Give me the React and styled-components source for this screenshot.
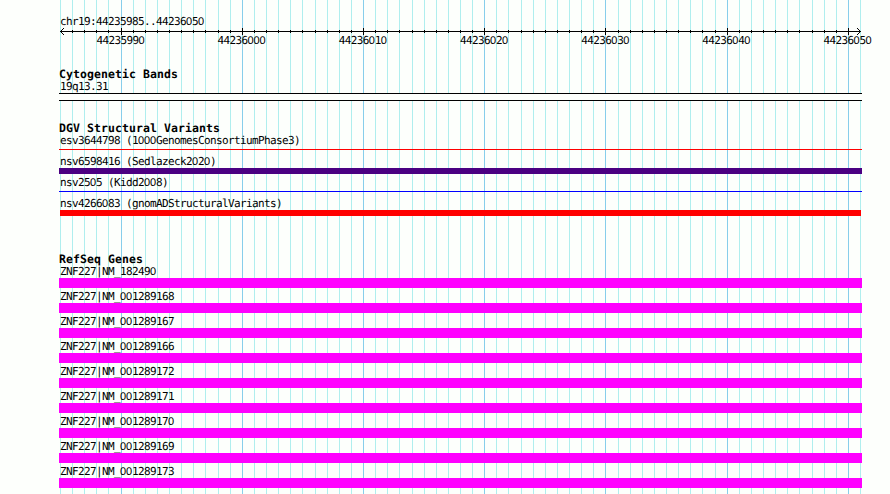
import React from "react";
import styled, { createGlobalStyle } from "styled-components";

const Reset = createGlobalStyle`
  * { box-sizing: border-box; }
  body { margin: 0; background: #fdfffc; overflow: hidden; }
`;

const Browser = styled.main`
  position: relative;
  width: 890px;
  height: 494px;
  overflow: hidden;
  background: #fdfffc;
  color: #000;
`;

const GridLayer = styled.svg`
  position: absolute;
  inset: 0;
  shape-rendering: crispEdges;
`;

const Content = styled.div`
  position: relative;
  display: flex;
  flex-direction: column;
  width: 803px;
  margin-left: 59px;
  padding-top: 16px;
`;

const Label = styled.div`
  height: 12px;
  padding-left: 1px;
  font: 11px/12px "DejaVu Sans Mono", monospace;
  letter-spacing: -0.622px;
  white-space: pre;
  text-rendering: geometricPrecision;
`;

const Zero = styled.span`
  font-family: "Liberation Sans", sans-serif;
  letter-spacing: -0.118px;
`;

const Title = styled.h2`
  height: 13px;
  margin: 0;
  font: bold 11.5px/13px "DejaVu Sans Mono", monospace;
  letter-spacing: 0.077px;
  white-space: pre;
  text-rendering: geometricPrecision;
`;

const Axis = styled.svg`
  display: block;
  height: 8px;
  width: 803px;
  margin-top: -1px;
  shape-rendering: crispEdges;
`;

const ScaleLabels = styled.div`
  display: grid;
  grid-template-columns: repeat(7, 121.2px);
  margin-left: 36.4px;
`;

const Track = styled.section`
  margin-top: ${(p) => p.$gap}px;
`;

const Feature = styled.div`
  height: ${(p) => p.$pitch}px;
`;

const Bar = styled.div`
  height: ${(p) => p.$height}px;
  margin: ${(p) => p.$offset}px ${(p) => p.$inset || 0}px 0;
  background: ${(p) => p.$color};
`;

const Band = styled.div`
  height: 8px;
  border: solid #000;
  border-width: 1px 0;
  background: #fdfffc;
`;

const ticks = Array.from({ length: 67 }, (_, k) => ({
  x: 60 + Math.round((k * 800) / 66),
  major: k % 10 === 5,
}));

const scale = [44235990, 44236000, 44236010, 44236020, 44236030, 44236040, 44236050];

const variants = [
  { name: "esv3644798 (1000GenomesConsortiumPhase3)", color: "#ff0000", offset: 2, height: 1 },
  { name: "nsv6598416 (Sedlazeck2020)", color: "#4b0082", offset: 0, height: 6 },
  { name: "nsv2505 (Kidd2008)", color: "#0000ff", offset: 2, height: 1 },
  { name: "nsv4266083 (gnomADStructuralVariants)", color: "#ff0000", offset: 0, height: 6, inset: 1 },
];

const genes = ["182490", "001289168", "001289167", "001289166", "001289172", "001289171", "001289170", "001289169", "001289173"];

function Text({ children }) {
  return (
    <Label>
      {String(children).split(/(0+)/).map((part, i) => (i % 2 ? <Zero key={i}>{part}</Zero> : part))}
    </Label>
  );
}

export default function App() {
  return (
    <>
      <Reset />
      <Browser>
        <GridLayer width="890" height="494" aria-hidden="true">
          {ticks.map(({ x, major }) => (
            <rect key={x} x={x} y="0" width="1" height="494" fill={major ? "#87ceeb" : "#afeeee"} />
          ))}
        </GridLayer>
        <Content>
          <Text>chr19:44235985..44236050</Text>
          <Axis viewBox="59 27 803 8" aria-hidden="true">
            <rect x="60" y="31" width="801" height="1" />
            {ticks.slice(1, -1).map(({ x, major }) => (
              <rect key={x} x={x} y={major ? 28 : 30} width="1" height={major ? 7 : 3} />
            ))}
            {[1, 2, 3].map((d) => (
              <React.Fragment key={d}>
                <rect x={60 + d} y={31 - d} width="1" height="1" />
                <rect x={60 + d} y={31 + d} width="1" height="1" />
                <rect x={860 - d} y={31 - d} width="1" height="1" />
                <rect x={860 - d} y={31 + d} width="1" height="1" />
              </React.Fragment>
            ))}
          </Axis>
          <ScaleLabels>
            {scale.map((n) => <Text key={n}>{n}</Text>)}
          </ScaleLabels>
          <Track $gap={21}>
            <Title>Cytogenetic Bands</Title>
            <Text>19q13.31</Text>
            <Band />
          </Track>
          <Track $gap={21}>
            <Title>DGV Structural Variants</Title>
            {variants.map((v) => (
              <Feature key={v.name} $pitch={21}>
                <Text>{v.name}</Text>
                <Bar $color={v.color} $height={v.height} $offset={v.offset} $inset={v.inset} />
              </Feature>
            ))}
          </Track>
          <Track $gap={34}>
            <Title>RefSeq Genes</Title>
            {genes.map((id) => (
              <Feature key={id} $pitch={25}>
                <Text>{`ZNF227|NM_${id}`}</Text>
                <Bar $color="#ff00ff" $height={10} $offset={0} />
              </Feature>
            ))}
          </Track>
        </Content>
      </Browser>
    </>
  );
}
